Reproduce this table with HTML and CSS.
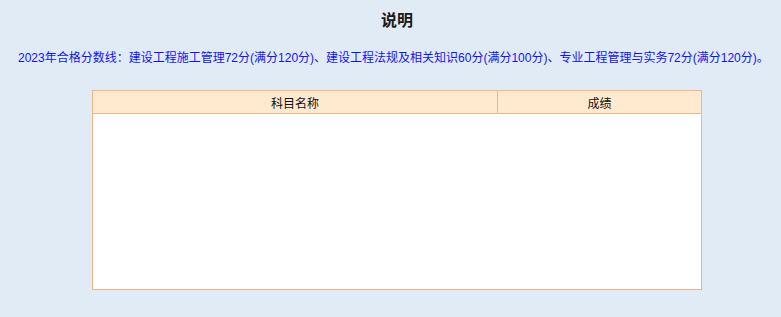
FILE: index.html
```html
<!DOCTYPE html>
<html lang="zh-CN">
<head>
  <meta charset="UTF-8">
  <title>说明</title>
  <link rel="stylesheet" href="styles.css">
</head>
<body>
<div class="page">
  <h2 class="title">说明</h2>
  <p class="notice">2023年合格分数线：建设工程施工管理72分(满分120分)、建设工程法规及相关知识60分(满分100分)、专业工程管理与实务72分(满分120分)。</p>
  <table class="score-table">
    <thead>
      <tr><th class="col-name">科目名称</th><th>成绩</th></tr>
    </thead>
    <tbody>
      <tr><td class="empty"></td><td class="empty"></td></tr>
    </tbody>
  </table>
</div>
</body>
</html>
```

FILE: styles.css
```css
body { margin: 0; background: #e1ebf5; font-family: "Liberation Sans", "Noto Sans CJK SC", sans-serif; font-size: 12px; color: #111; }
.page { width: 794px; padding-top: 10px; }
.title { margin: 0; font-size: 16px; line-height: 22px; text-align: center; font-weight: bold; color: #1a1a1a; }
.notice { margin: 18px 0 0 18px; line-height: 16px; color: #1414f0; white-space: nowrap; }
.score-table { margin: 24px 0 0 92px; width: 610px; border-collapse: collapse; background: #fff; border: 1px solid #f2b48a; }
.score-table th { height: 22px; padding: 0; background: #ffe9cf; border: 1px solid #f2b48a; font-weight: normal; font-size: 12px; color: #111; }
.score-table .col-name { width: 404px; }
.score-table td.empty { height: 175px; padding: 0; }
```
